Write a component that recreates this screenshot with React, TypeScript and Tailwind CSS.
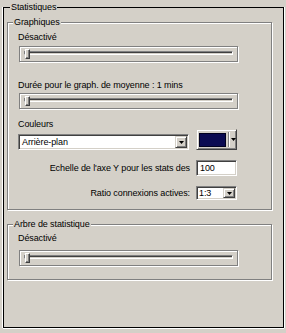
import React from "react";

const sunken =
  "border border-t-[#808080] border-l-[#808080] border-b-white border-r-white shadow-[inset_1px_1px_0_#404040,inset_-1px_-1px_0_#d4d0c8]";
const raised =
  "border border-t-[#d4d0c8] border-l-[#d4d0c8] border-b-[#404040] border-r-[#404040] shadow-[inset_1px_1px_0_#fff,inset_-1px_-1px_0_#808080] bg-[#d4d0c8]";
const etched =
  "border border-[#808080] shadow-[inset_1px_1px_0_#fff,1px_1px_0_#fff]";

function Arrow() {
  return (
    <svg width="5" height="3" viewBox="0 0 5 3" className="block">
      <polygon points="0,0 5,0 2.5,3" fill="#000" />
    </svg>
  );
}

function DropButton() {
  return (
    <div className={`flex h-full w-[12px] items-center justify-center ${raised}`}>
      <Arrow />
    </div>
  );
}

function Slider({ className = "" }: { className?: string }) {
  return (
    <div className={`relative ml-[11px] h-[16px] w-[219px] ${etched} ${className}`}>
      <div className="absolute left-[4px] right-[4px] top-[4px] h-[4px] border border-t-[#808080] border-l-[#808080] border-b-white border-r-white bg-[#d4d0c8] shadow-[inset_1px_1px_0_#404040]" />
      <div className="absolute left-[5px] top-[2px] h-[10px] w-[5px] border border-t-white border-l-white border-b-[#404040] border-r-[#404040] bg-[#d4d0c8] shadow-[inset_-1px_-1px_0_#808080]" />
    </div>
  );
}

function Label({ children, className = "" }: { children: React.ReactNode; className?: string }) {
  return <div className={`pl-[10px] leading-[13px] ${className}`}>{children}</div>;
}

export default function App() {
  return (
    <div className="h-[333px] w-[286px] overflow-hidden bg-[#d4d0c8] pt-[1px] font-['Liberation_Sans',Arial,sans-serif] text-[9px] tracking-[-0.1px] text-black">
      <fieldset className="ml-[3px] h-[327px] w-[281px] border border-black shadow-[-1px_0_0_#fff,1px_0_0_#fff,0_1px_0_#fff]">
        <legend className="ml-[6px] bg-[#d4d0c8] px-[1px] leading-[13px]">Statistiques</legend>

        <fieldset className={`ml-[3px] mt-[2px] w-[265px] pb-[9px] ${etched}`}>
          <legend className="ml-[5px] bg-[#d4d0c8] px-[1px] leading-[13px]">Graphiques</legend>

          <Label className="mt-[2px]">Désactivé</Label>
          <Slider className="mt-[2px]" />

          <Label className="mt-[17px]">Durée pour le graph. de moyenne : 1 mins</Label>
          <Slider className="mt-[1px]" />

          <Label className="mt-[9px]">Couleurs</Label>
          <div className="-mt-[2px] flex h-[21px] items-start gap-[7px] pl-[10px]">
            <div className={`mt-[5px] flex h-[16px] w-[171px] bg-white p-[1px] ${sunken}`}>
              <div className="flex-1 pl-[2px] leading-[12px]">Arrière-plan</div>
              <DropButton />
            </div>
            <div className={`flex h-[21px] w-[41px] items-center pl-[2px] ${raised}`}>
              <div className="h-[14px] w-[27px] border border-[#000020] bg-[#0b0b52]" />
              <div className="ml-[2px] h-[15px] w-[2px] border-l border-l-[#808080] border-r border-r-white" />
              <div className="ml-[1px]">
                <Arrow />
              </div>
            </div>
          </div>

          <div className="mt-[10px] flex h-[16px] items-center justify-end gap-[6px] pr-[34px]">
            <span className="pt-[2px]">Echelle de l'axe Y pour les stats des</span>
            <div className={`h-[16px] w-[41px] bg-white pl-[3px] leading-[14px] ${sunken}`}>100</div>
          </div>

          <div className="mt-[10px] flex h-[14px] items-center justify-end gap-[6px] pr-[34px]">
            <span className="pt-[1px]">Ratio connexions actives:</span>
            <div className={`flex h-[14px] w-[41px] bg-white p-[1px] ${sunken}`}>
              <div className="flex-1 pl-[1px] leading-[10px]">1:3</div>
              <DropButton />
            </div>
          </div>
        </fieldset>

        <fieldset className={`ml-[3px] mt-[8px] w-[265px] pb-[13px] ${etched}`}>
          <legend className="ml-[5px] bg-[#d4d0c8] px-[1px] leading-[13px]">Arbre de statistique</legend>
          <Label className="mt-[1px]">Désactivé</Label>
          <Slider className="mt-[5px]" />
        </fieldset>
      </fieldset>
    </div>
  );
}
